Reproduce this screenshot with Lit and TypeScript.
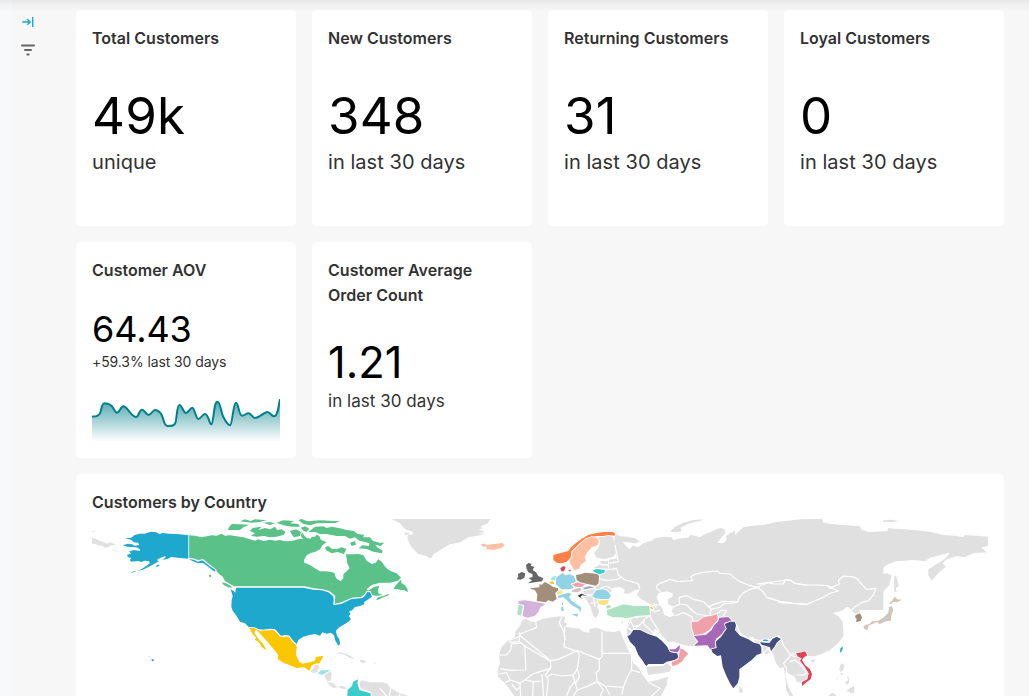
import { LitElement, html, svg, css } from "lit";
import { customElement, property } from "lit/decorators.js";

type Shape = [string, string];
interface Region {
  x: number;
  y: number;
  land?: string[];
  water?: string[];
  borders?: string[];
  shapes?: Shape[];
}

const GRAY = "#e0e0e0";
const BLUE = "#1fa8cd";
const GREEN = "#5ac189";
const NAVY = "#454e7c";
const YELLOW = "#fcc700";
const RED = "#e04355";
const SKY = "#8fd3e4";
const CYAN = "#3cccca";
const PURPLE = "#a868b7";
const PINK = "#efa1aa";
const BROWN = "#a38f79";
const DARK = "#666666";
const MINT = "#ace1c4";
const SAND = "#fde380";

/* Each region is drawn on its own grid, three units to a pixel. */
const REGIONS: Region[] = [
  {
    x: 620, y: 510,
    land: [
      "-15,73 0,78 20,80 45,85 60,95 45,100 25,97 8,96 20,110 30,118 38,106 55,112 70,100 95,92 105,85 130,80 155,82 160,90 185,85 205,83 210,75 225,77 240,82 255,72 275,65 290,58 303,54 315,60 316,70 305,82 292,98 310,100 320,90 318,78 330,70 345,62 345,75 355,65 370,52 390,48 430,45 470,36 540,28 600,27 605,27 610,38 630,42 680,48 720,50 725,60 745,67 770,65 790,70 790,300 700,300 698,295 680,290 670,300 655,305 638,310 655,318 668,335 670,360 670,378 655,400 630,420 605,432 585,438 562,438 545,452 560,470 568,480 570,500 548,518 530,515 525,500 515,495 505,490 499,482 496,500 505,530 520,558 508,558 498,540 498,520 495,500 492,472 480,475 468,460 462,440 455,425 440,432 425,430 410,425 400,380 300,400 222,408 205,408 180,402 160,395 145,395 130,380 115,365 105,355 98,372 60,372 22,378 20,362 25,335 40,325 90,318 92,288 65,268 50,255 60,238 45,240 25,252 10,250 15,240 0,230 -20,233 -30,250 -33,265 -60,270 -68,290 -62,305 -72,325 -80,318 -88,292 -100,270 -118,252 -115,235 -63,225 -63,192 -80,180 -70,168 -60,160 -35,150 -10,145 -18,110",
      "150,65 165,50 190,38 220,30 250,28 242,32 205,41 182,53 184,64 165,67",
      "-70,85 -55,79 -35,77 -22,80 -15,105 -10,125 -20,140 -45,147 -70,143 -78,130 -65,113 -60,100",
      "80,470 130,467 140,458 155,472 150,484 115,497 88,503 82,490",
      "358,528 368,538 368,548 358,548",
    ],
    water: [
      "115,250 140,244 158,250 158,260 142,268 145,282 160,292 155,305 165,315 150,322 132,314 128,298 118,282 110,262",
      "105,356 112,362 130,385 145,398 160,398 180,402 175,408 150,416 140,408 125,388",
    ],
    borders: [
      "110,235 110,228 120,220 150,208 175,215 200,213 218,212 212,200 225,193 245,188 290,183 300,190 330,192 345,205 360,215 385,225 412,232 425,225 445,218 460,222 490,222 495,210 510,210 525,220 555,225 590,225 620,235 650,235 625,230 655,212 670,198 695,200 712,207 725,222 740,238 768,235 760,255 745,272 725,278 712,290",
      "412,232 430,245 440,262 480,274 520,280 560,283 590,270 610,262 630,250 655,245 645,235",
      "110,235 125,248", "178,285 178,262 200,257 220,268 250,275 265,290 290,280 310,274 352,276 358,262 370,248 390,238 412,232",
      "158,292 180,282 200,285 215,300 230,312 250,315 270,318", "265,290 275,298 300,292 310,282 330,280 352,276", "280,295 270,305 272,318 290,312 305,300 320,302 310,318 298,323", "165,318 190,308 215,320 220,335",
      "100,283 120,285", "60,268 92,285 110,290", "92,300 105,305 120,300", "90,318 95,330 105,345 118,365", "30,330 40,350 60,345 75,325 90,318", "22,352 35,362 60,345", "75,325 70,340 90,360 110,378",
      "335,332 350,345 360,370 385,385 420,392 450,388 475,378 485,390 490,405 500,418 510,432 530,430",
      "360,372 380,395 420,402 422,392", "425,405 430,430 445,415 452,428",
      "498,500 500,475 490,460 505,445 512,435 525,440 540,430", "510,455 525,450 540,462 550,475 560,490 548,495 530,495",
      "-60,185 -40,180 -10,175 -5,195 15,210 35,215 55,222 60,238", "-63,205 -40,212 -10,208 5,202", "-45,180 -35,160 -5,155 -15,105", "-60,235 -40,228 -20,240 -15,255", "-115,245 -90,235 -70,240", "-100,255 -80,260 -75,290", "-88,280 -70,278",
    ],
  },
  {
    x: 780, y: 510,
    land: [
      "80,28 125,28 130,32 110,37 150,42 200,46 238,49 245,60 265,67 290,65 322,63 325,55 400,60 450,65 490,75 530,78 550,82 555,75 600,78 624,80 624,108 604,112 620,127 580,130 555,142 530,138 500,148 487,160 497,170 480,185 470,195 455,212 445,195 445,178 470,162 490,150 508,132 505,128 475,137 450,143 435,154 400,150 350,154 325,162 310,172 290,188 305,193 320,190 335,196 328,225 310,245 290,262 270,272 250,282 235,295 240,305 228,312 218,305 205,292 190,288 160,308 80,300",
      "342,200 348,196 356,228 348,235 350,246 343,245", "92,450 106,448 102,457 95,457", "180,468 186,460 193,465 190,480 182,487 178,478", "196,515 204,512 202,500 206,500 208,518 200,525", "195,545 205,538 222,528 223,548 212,550 205,543", "145,558 155,548 165,552 168,558", "308,31 330,29 357,33 340,36 310,35",
      "168,508 177,497 170,509", "180,488 190,490 186,495",
    ],
    borders: [
      "-70,222 20,210 30,210 45,220 75,225 110,225 140,227 155,232 178,222 175,212 190,198 215,200 230,205 245,222 260,238 288,235 280,255 265,272 245,278 225,290 215,300",
      "-5,277 40,280 80,283 110,270 130,262 150,250 175,243 160,236 145,234",
    ],
    shapes: [
      ["48,430 65,427 75,424 82,436 72,442 66,450 75,465 90,478 96,492 92,508 80,516 66,528 66,516 82,508 86,490 75,472 60,452 65,445 54,440", RED],
      ["227,315 240,310 246,322 242,333 228,337 230,326 225,322", BROWN],
      ["250,350 255,345 268,342 276,334 292,333 308,325 325,308 327,292 335,288 340,300 333,320 333,332 318,334 308,338 298,343 292,336 276,342 266,347 262,360 254,358", "#d1c6bc"],
      ["327,280 335,274 344,260 352,268 366,269 352,277 338,276 333,283", "#d1c6bc"],
      ["180,424 182,415 188,409 188,417 182,428", BLUE],
    ],
  },
  {
    x: 620, y: 510,
    shapes: [
      ["22,378 30,375 40,360 60,360 85,372 110,380 125,392 140,408 150,425 172,430 175,443 165,450 140,455 130,462 110,462 85,462 78,469 68,452 55,435 45,410 30,395", NAVY],
      ["154,457 175,448 178,432 180,415 190,418 205,431 192,445 188,453 175,463 158,469", PINK],
      ["148,418 165,418 180,405 178,420 172,427 152,424", PURPLE],
      ["215,335 232,335 250,322 270,318 282,316 290,312 293,320 293,330 280,345 270,358 255,368 240,374 222,375 218,360 215,350", PINK],
      ["222,378 258,374 275,360 283,345 294,335 298,323 325,321 335,332 315,338 318,355 304,374 288,386 285,400 288,412 272,418 262,406 222,407 235,395", PURPLE],
      ["274,418 290,414 287,395 302,382 320,356 314,342 330,335 344,335 348,346 345,360 360,377 385,388 402,398 418,402 424,412 424,430 410,435 395,450 375,465 358,478 358,500 353,520 340,535 330,520 318,495 308,470 303,436 292,438 278,428", NAVY],
      ["420,397 448,399 458,386 470,380 483,387 470,398 465,408 453,424 450,412 425,404", NAVY],
      ["427,392 434,388 446,391 440,394", BLUE],
      ["89,290 98,292 100,298 93,297", "#f7cf4b"],
    ],
  },
  {
    x: 490, y: 600,
    land: [
      "97,60 110,57 122,65 137,66 155,58 185,52 215,49 226,51 222,65 232,72 226,80 245,83 268,86 280,95 297,98 300,86 320,83 345,94 372,96 390,92 400,112 415,145 425,170 430,190 445,202 455,218 468,238 480,245 535,230 530,255 510,292 75,292 55,262 40,245 24,230 23,210 30,190 27,165 35,140 50,125 75,110 76,95 90,78",
    ],
    water: ["393,100 402,110 410,105 418,130 440,165 470,200 474,230 462,222 445,200 430,180 412,145", "474,232 500,240 535,228 545,215 475,225"],
    borders: [
      "137,66 140,82 120,90 88,103 88,97", "88,110 60,120 60,128 88,125", "88,103 88,130 65,132 62,150 50,165 27,165", "88,125 104,138 108,210 60,211 30,206", "104,138 180,183", "88,105 182,182 205,178 262,152",
      "215,50 208,68 220,92 225,110 222,140 262,155", "225,80 222,110", "262,152 328,178 336,170 336,95", "338,160 422,160", "328,178 328,210 318,218 322,245 345,258 400,262", "262,152 268,165 262,205 248,230",
      "182,182 182,205 150,215 128,222 105,240 90,250 62,240 45,248", "182,205 165,225 175,238", "170,232 185,222 215,228 248,225 255,245 240,262 230,288", "175,238 170,288", "158,245 160,288", "130,245 128,288", "90,250 92,288", "105,240 130,245 158,243 155,222", "25,222 50,218 60,240", "65,252 80,270 90,262",
      "255,245 262,270 290,260 322,245", "262,270 250,288", "322,245 340,270 330,288", "345,258 360,285", "425,170 425,210 415,225 400,262 395,285", "425,210 450,218", "455,218 480,250 510,265 485,288", "262,205 268,230 258,248",
    ],
    shapes: [
      ["350,30 375,22 400,13 430,18 478,18 480,45 440,48 425,52 410,54 390,52 370,52 352,45", MINT],
      ["349,16 358,15 364,22 350,26", MINT],
      ["393,66 400,64 398,69", MINT],
      ["413,70 418,68 414,76", MINT],
    ],
  },
  {
    x: 500, y: 525,
    shapes: [
      ["78,120 85,114 95,116 92,122 103,126 98,135 108,142 115,153 130,160 126,169 105,172 84,175 96,166 86,160 98,155 97,147 85,142 80,132", DARK],
      ["54,147 65,141 76,145 73,158 62,164 50,163 55,155", DARK],
      ["160,90 185,83 205,78 212,68 225,56 245,41 265,30 290,24 310,21 340,21 346,28 343,32 325,30 310,33 290,33 268,40 250,48 238,60 223,72 215,82 212,98 200,110 185,115 170,113 160,105", "#ff7f44"],
      ["217,80 232,65 245,53 256,43 275,36 290,38 297,48 293,60 275,67 262,82 254,95 258,107 242,120 238,131 222,135 216,124 208,110 215,98", "#fec0a1"],
      ["118,178 125,179 135,171 148,178 158,185 174,190 174,198 166,205 170,222 158,230 145,226 137,232 110,228 112,208 105,196 88,190 105,188 118,187", BROWN],
      ["55,228 75,226 108,231 138,237 122,245 115,260 105,272 82,278 68,273 70,258 72,242 56,238", "#d3b3da"],
      ["56,240 69,242 66,257 63,272 51,268 54,255", MINT],
      ["152,163 160,154 172,152 168,165 155,166", "#9ee5e5"],
      ["147,172 158,169 163,176 156,178", YELLOW],
      ["168,158 180,149 188,143 195,151 208,148 222,153 228,172 214,176 222,190 205,193 185,193 178,187 168,178", SKY],
      ["181,130 190,123 197,126 192,139 184,139", RED],
      ["205,135 213,134 210,140", RED],
      ["169,204 180,196 191,200 184,207 173,208", "#fde380"],
      ["173,212 190,207 207,203 215,208 207,215 215,228 243,247 242,262 236,252 215,240 197,222 188,216 176,220", SKY],
      ["215,267 235,266 231,275", SKY],
      ["183,247 190,245 191,257 184,258", SKY],
      ["185,234 189,233 188,241", BROWN],
      ["214,198 225,191 243,188 242,197 232,202 216,201", "#d1c6bc"],
      ["215,178 235,172 256,178 244,186 226,185", PINK],
      ["249,189 265,184 285,186 270,190 255,194", "#a1a6bd"],
      ["245,200 265,194 288,193 278,206 258,208", GRAY],
      ["233,212 244,206 262,212 246,211 241,216 250,223 238,216", "#363636"],
      ["228,150 245,147 255,143 292,146 297,152 296,175 288,182 262,177 240,172 230,165", BROWN],
      ["277,213 288,196 308,193 322,197 333,212 326,222 305,222 285,220", SKY],
      ["293,226 326,225 324,237 312,241 296,238", SAND],
      ["279,136 292,131 316,135 312,144 298,148 282,141", CYAN],
      ["298,109 324,107 324,117 306,118", GRAY],
      ["280,128 297,121 324,122 324,131 300,130", GRAY],
    ],
  },
  {
    x: 380, y: 510,
    land: [
      "35,27 60,40 75,57 100,67 97,74 75,74 72,68 88,68 82,82 86,96 95,112 115,132 138,138 153,146 160,133 180,120 210,103 240,97 265,82 300,76 316,71 292,70 315,66 302,60 290,57 308,56 302,48 320,42 328,32 332,27",
    ],
    shapes: [["303,102 314,101 320,106 335,103 350,101 368,99 375,107 360,115 340,120 318,117 322,111 307,109", "#fec0a1"]],
  },
  {
    x: 220, y: 510,
    land: [
      "272,485 280,474 285,462 297,464 296,474 292,487 280,489", "312,497 330,483 335,490 332,512 322,513", "320,515 340,520 350,531 368,527 382,535 372,538 355,532 340,534 325,522",
      "418,515 428,511 450,517 488,517 500,520 512,535 540,550 568,557 455,558 452,545 422,535",
      "345,430 360,426 385,434 405,446 390,445 375,435 360,430", "418,451 428,449 441,456 425,459", "459,459 468,460 464,462", "392,456 400,457 395,459",
    ],
    borders: ["480,535 488,545 500,558", "512,535 508,558", "540,550 538,558"],
    shapes: [
      ["-94,76 -75,77 -55,82 -40,79 -25,76 -10,77 5,71 15,77 30,76 45,78 70,82 90,88 105,92 115,88 130,93 150,89 165,92 180,90 195,94 215,93 240,86 250,88 242,78 243,62 252,76 260,84 272,86 275,80 285,80 290,74 298,78 303,90 320,96 308,105 300,118 285,126 272,129 260,136 252,150 253,158 268,164 285,175 300,184 320,184 343,188 348,205 362,214 370,205 370,193 380,184 389,175 382,160 380,148 378,133 400,133 415,132 430,135 440,152 455,162 467,158 475,148 485,155 498,173 510,182 530,190 543,203 535,212 510,218 480,218 455,225 440,238 445,242 460,232 478,227 474,240 475,250 490,256 468,257 455,255 452,243 440,244 432,254 425,260 395,263 380,270 365,277 344,282 346,258 328,243 305,237 280,235 255,229 42,229 30,222 15,213 8,200 -5,190 -15,178 -25,168 -38,158 -50,148 -65,150 -78,146 -94,144", GREEN],
      ["5,217 18,220 32,227 37,233 25,232 12,226", GREEN],
      ["-34,194 -27,194 -27,202 -32,200", GREEN],
      ["468,269 474,262 490,258 508,251 504,257 492,261 474,269", GREEN],
      ["520,238 528,225 542,209 545,220 555,226 562,236 564,246 556,243 552,240 542,240 532,237", GREEN],
      ["23,60 28,50 35,42 60,43 88,44 70,52 60,60 40,60", GREEN],
      ["90,63 98,54 125,50 115,60 135,54 150,58 165,50 172,60 185,58 197,66 190,75 170,80 150,82 132,78 110,80 92,78 105,70", GREEN],
      ["60,34 75,28 92,33 105,28 140,31 120,36 95,38", GREEN],
      ["130,38 150,36 165,40 150,45", GREEN],
      ["170,38 190,31 222,33 210,40 235,42 240,50 215,50 190,46", GREEN],
      ["210,63 228,58 243,66 240,78 222,82 216,74", GREEN],
      ["242,53 256,49 268,56 260,66 250,62", GREEN],
      ["235,30 245,27 262,34 300,31 360,34 345,39 290,40 270,46 250,42", GREEN],
      ["265,66 285,50 310,49 320,54 335,50 360,55 380,60 402,63 412,72 432,74 430,82 450,82 458,92 478,98 493,98 482,108 465,104 472,112 488,122 485,130 460,125 440,117 415,115 428,106 447,108 448,100 435,96 418,92 405,82 390,86 375,78 350,78 320,72 300,72 285,66", GREEN],
      ["315,112 325,108 335,116 350,118 365,112 379,117 372,132 352,126 335,130 318,120", GREEN],
      ["390,98 405,93 408,104 395,108", GREEN],
      ["48,233 250,233 280,239 305,241 325,247 340,259 341,272 340,286 365,281 380,274 395,267 427,264 435,257 442,246 450,247 456,260 445,268 433,276 432,283 420,288 405,291 397,300 387,305 392,312 386,318 393,328 385,335 370,345 356,353 348,362 350,375 358,388 360,402 355,407 346,392 342,376 333,368 320,371 307,367 300,377 285,372 265,376 250,380 235,390 230,402 220,393 208,377 195,374 183,378 175,368 165,358 150,356 130,360 105,355 85,350 75,340 60,335 50,318 38,302 34,290 35,270 38,258 32,238 40,242 46,248", BLUE],
      ["88,354 103,354 118,362 150,361 163,361 178,378 190,382 205,379 215,393 228,405 230,412 228,435 238,455 248,461 270,457 285,452 288,441 310,437 304,450 298,460 283,462 276,466 268,482 252,472 230,474 210,466 190,458 173,447 175,435 160,416 145,398 130,382 118,368 108,358 103,368 115,386 130,403 140,422 126,412 116,396 105,390 108,383 98,372", YELLOW],
      ["293,490 303,481 330,480 322,487 308,495 300,493", "#9ee5e5"],
      ["382,560 383,540 396,528 400,515 414,508 412,520 418,540 452,550 452,560", CYAN],
    ],
  },
  {
    x: 88, y: 510,
    land: ["10,83 22,86 35,92 50,98 58,101 65,97 82,103 75,106 66,107 62,112 50,113 45,108 32,106 20,102 10,100", "10,64 22,64 22,66 10,66"],
    shapes: [
      ["301,76 275,73 245,71 222,69 215,73 205,67 188,65 170,71 155,71 140,75 130,83 112,85 130,90 137,97 150,98 154,105 140,107 132,103 120,101 104,106 118,110 145,112 155,117 157,123 138,120 122,125 130,130 117,135 120,142 130,144 125,150 130,155 150,153 160,156 170,152 183,154 185,160 175,168 160,178 145,184 165,179 187,168 205,158 213,154 206,151 212,146 222,142 232,138 232,143 223,150 240,146 250,141 270,143 285,145 301,146", BLUE],
      ["302,147 318,149 330,155 343,151 355,160 368,170 383,180 380,185 370,178 358,168 345,159 330,160 312,152", BLUE],
      ["203,168 210,164 216,166 207,171", BLUE],
      ["126,188 138,184 147,182 136,187", BLUE],
      ["190,448 197,448 197,453 192,454", BLUE],
      ["182,438 187,438 187,440 182,440", "#b9e3ef"],
      ["70,121 90,122 98,124 80,123", "#b9e3ef"],
    ],
  },
];

const TREND =
  "M48,140C60,139 68,139 73,128C77,116 77,99 86,100C98,101 106,105 110,112C115,118 117,128 123,128C131,128 134,109 142,109C150,109 155,120 162,127C167,133 175,141 181,141C188,141 190,119 198,119C205,119 210,135 218,135C225,135 230,120 237,120C246,120 256,129 260,142C264,153 264,167 275,168C287,168 296,168 299,156C303,138 303,105 310,105C318,105 322,129 330,129C338,129 342,113 349,113C356,113 359,147 367,147C375,147 379,132 387,132C397,132 400,163 406,163C413,161 413,95 424,95C433,95 435,125 441,139C447,150 454,166 462,166C470,164 471,98 480,98C488,98 488,137 498,137C506,137 510,130 518,130C526,130 529,144 537,144C549,144 565,126 574,126C583,126 586,139 594,139C605,139 607,110 612,88";

const poly = (p: string) => "M" + p.split(" ").join("L") + "Z";
const line = (p: string) => "M" + p.split(" ").join("L");

@customElement("country-map")
class CountryMap extends LitElement {
  static styles = css`
    :host { display: block; height: 177px; }
    svg { display: block; }
    .water { fill: #fff; }
    .land { fill: #e0e0e0; }
    .border { fill: none; stroke: #fff; stroke-width: 3.6; stroke-linejoin: round; }
    .country { stroke: #fff; stroke-width: 5; stroke-linejoin: round; paint-order: stroke; }
  `;
  render() {
    return html`<svg width="896" height="177" viewBox="92 519 896 177">
      ${REGIONS.map((r) => svg`<g transform="translate(${r.x} ${r.y}) scale(0.33333)">
        ${(r.land ?? []).map((p) => svg`<path class="land" d=${poly(p)} />`)}
        ${(r.water ?? []).map((p) => svg`<path class="water" d=${poly(p)} />`)}
        ${(r.borders ?? []).map((p) => svg`<path class="border" d=${line(p)} />`)}
        ${(r.shapes ?? []).map(([p, c]) => svg`<path class="country" fill=${c} d=${poly(p)} />`)}
      </g>`)}
    </svg>`;
  }
}

@customElement("stat-card")
class StatCard extends LitElement {
  @property() heading = "";
  @property() value = "";
  @property() note = "";
  @property() size = "large";
  static styles = css`
    :host { display: block; height: 216px; box-sizing: border-box; padding: 16px 16px 0; background: #fff; border-radius: 4px; overflow: hidden; }
    .heading { font-size: 16px; line-height: 25px; font-weight: 600; color: #323232; letter-spacing: 0.02px; }
    .value { color: #000; white-space: nowrap; }
    .note { color: #323232; white-space: nowrap; }
    .large .value { margin-top: 33px; font-size: 51px; line-height: 64px; letter-spacing: 0.2px; }
    .large .note { margin-top: 1px; font-size: 20px; line-height: 26px; letter-spacing: 0.05px; }
    .trend .value { margin-top: 23px; font-size: 36px; line-height: 46px; letter-spacing: -0.1px; }
    .trend .note { margin-top: 1px; font-size: 14px; line-height: 18px; letter-spacing: -0.1px; }
    .medium .value { margin-top: 27px; font-size: 43.5px; line-height: 54px; }
    .medium .note { margin-top: 1px; font-size: 17px; line-height: 22px; letter-spacing: 0.04px; }
  `;
  render() {
    return html`<div class=${this.size}>
      <div class="heading">${this.heading}</div>
      <div class="value">${this.value}</div>
      <div class="note">${this.note}</div>
      <slot></slot>
    </div>`;
  }
}

@customElement("app-root")
class AppRoot extends LitElement {
  static styles = css`
    :host { display: block; height: 696px; overflow: hidden; background: #f7f7f7; font-family: Inter, sans-serif; }
    .page { display: flex; height: 696px; background: linear-gradient(#e6e6e6, #f0f0f0 5px, #f7f7f7 12px); }
    .edge { width: 12px; background: linear-gradient(#e7e8ea, #f1f3f5 5px, #f7f9fb 12px); }
    .rail { width: 64px; display: flex; flex-direction: column; padding: 15px 0 0 8px; box-sizing: border-box; gap: 13px; }
    .rail svg { display: block; }
    .main { width: 928px; padding-top: 10px; }
    .cards { display: grid; grid-template-columns: repeat(4, 220px); gap: 16px; }
    .map { margin-top: 16px; height: 240px; background: #fff; border-radius: 4px; padding: 16px 16px 0; box-sizing: border-box; }
    .heading { height: 29px; font-size: 16px; line-height: 25px; font-weight: 600; color: #323232; letter-spacing: 0.02px; }
    .spark { display: block; margin-top: 27px; }
  `;
  render() {
    return html`<div class="page">
      <div class="edge"></div>
      <div class="rail">
        <svg width="16" height="14" viewBox="20 15 16 14"><path d="M22.2 22H30.2M27.2 19.2L30.2 22L27.2 24.8" fill="none" stroke="#20a7c9" stroke-width="1.5" /><path d="M32.7 17V27" stroke="#20a7c9" stroke-width="1.4" /></svg>
        <svg width="16" height="16" viewBox="20 42 16 16"><path d="M22 45.5H34M25 50H31M27.3 54.5H28.7" fill="none" stroke="#666" stroke-width="2" stroke-linecap="round" /></svg>
      </div>
      <div class="main">
        <div class="cards">
          <stat-card heading="Total Customers" value="49k" note="unique"></stat-card>
          <stat-card heading="New Customers" value="348" note="in last 30 days"></stat-card>
          <stat-card heading="Returning Customers" value="31" note="in last 30 days"></stat-card>
          <stat-card heading="Loyal Customers" value="0" note="in last 30 days"></stat-card>
          <stat-card heading="Customer AOV" value="64.43" note="+59.3% last 30 days" size="trend">
            <svg class="spark" width="188" height="44" viewBox="48 84 564 132">
              <defs><linearGradient id="fade" x1="0" y1="88" x2="0" y2="215" gradientUnits="userSpaceOnUse"><stop offset="0" stop-color="#007f8b" stop-opacity=".7" /><stop offset="1" stop-color="#007f8b" stop-opacity="0" /></linearGradient></defs>
              <path fill="url(#fade)" d=${TREND + "V215H48Z"} />
              <path fill="none" stroke="#007f8b" stroke-width="6" d=${TREND} />
            </svg>
          </stat-card>
          <stat-card heading="Customer Average Order Count" value="1.21" note="in last 30 days" size="medium"></stat-card>
        </div>
        <div class="map">
          <div class="heading">Customers by Country</div>
          <country-map></country-map>
        </div>
      </div>
    </div>`;
  }
}
